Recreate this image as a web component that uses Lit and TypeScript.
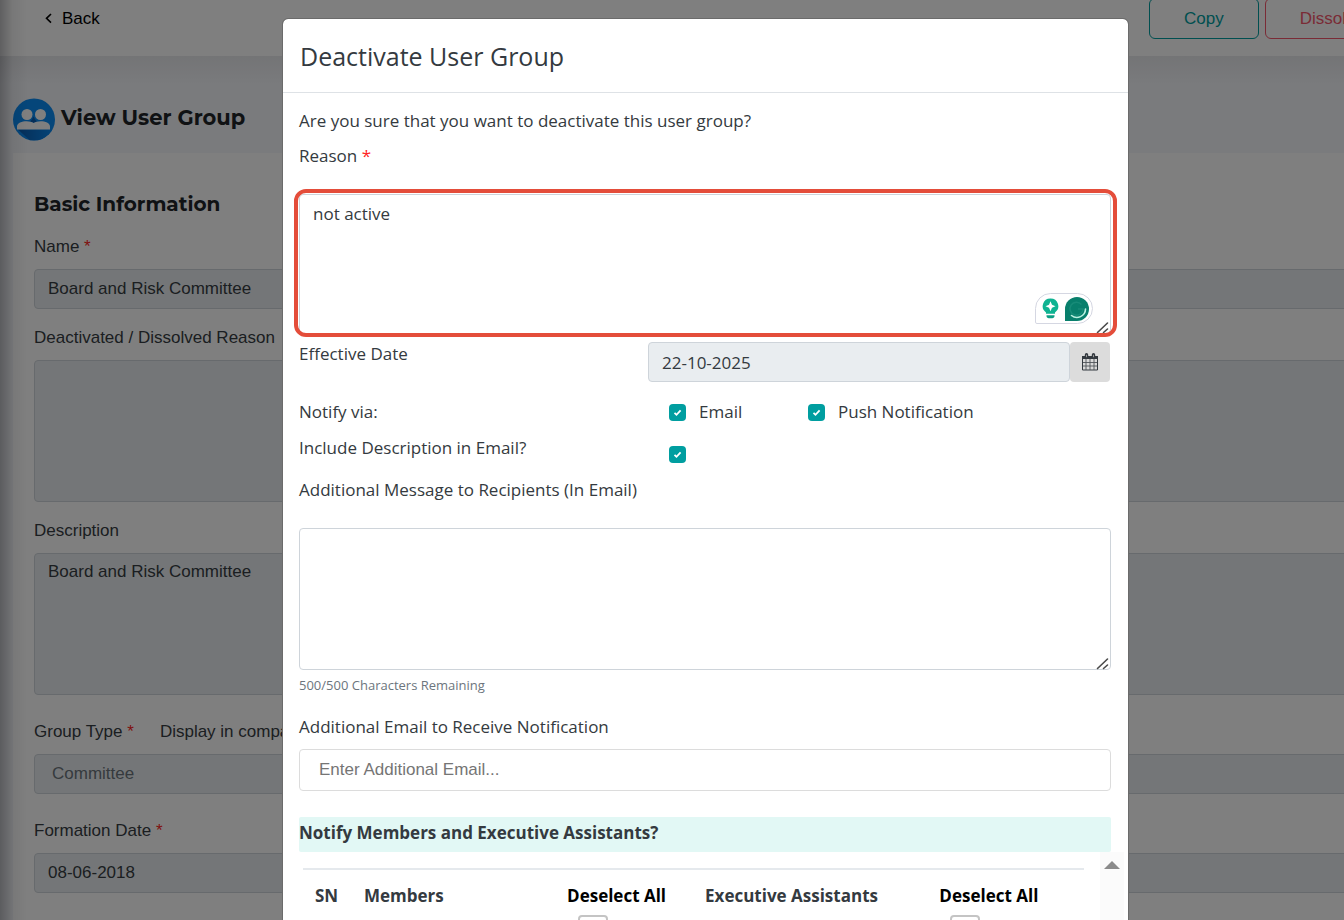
import { LitElement, html, css } from "lit";
import { customElement } from "lit/decorators.js";

const grip = html`<svg class="grip" viewBox="0 0 14 14" width="14" height="14" aria-hidden="true">
  <path d="M1.500 12.500 11.500 3M7.500 12.500 11.500 9" stroke="#4a4a4a" stroke-width="1.6" stroke-linecap="round" fill="none" />
</svg>`;

@customElement("app-root")
export class AppRoot extends LitElement {
  static styles = css`
    :host {
      display: block;
      height: 100vh;
      overflow: hidden;
      position: relative;
      font-family: "Liberation Sans", Arial, sans-serif;
      font-size: 17px;
      line-height: 24px;
      color: #373d43;
    }
    * {
      box-sizing: border-box;
    }
    input,
    textarea,
    button {
      font: inherit;
      color: inherit;
      margin: 0;
    }
    textarea {
      display: block;
      resize: none;
      width: 100%;
    }
    .req {
      color: #ff2424;
    }

    /* page behind the dialog */
    .page {
      width: calc(100% + 80px);
      background: #f4f6fa;
    }
    .topbar {
      height: 56px;
      background: #fff;
      overflow: hidden;
      display: flex;
      align-items: flex-end;
      justify-content: space-between;
      padding: 0 25px 17px 44px;
    }
    .back {
      display: flex;
      align-items: center;
      gap: 8px;
      color: #000;
      text-decoration: none;
      padding-bottom: 8px;
    }
    .actions {
      display: flex;
      gap: 6px;
    }
    .outline {
      height: 41px;
      padding: 0 34px;
      background: none;
      border: 1px solid;
      border-radius: 6px;
    }
    .teal {
      color: #009ea0;
    }
    .red {
      color: #f5576c;
    }
    .heading {
      height: 97px;
      padding: 30px 13px 0;
      display: flex;
      align-items: center;
      gap: 6px;
      background: linear-gradient(#e8e9ec, #f4f6fa 28px);
    }
    h1,
    h3 {
      margin: 0;
      font-family: Montserrat, Inter, sans-serif;
      font-weight: 700;
      color: #212529;
    }
    h1 {
      font-size: 21px;
      line-height: 28px;
      padding-bottom: 3px;
    }
    h3 {
      font-size: 20px;
      line-height: 28px;
      margin-bottom: 17px;
    }
    .card {
      margin-left: 13px;
      padding: 37px 21px 60px;
      background: #fff;
    }
    .field {
      display: flex;
      flex-direction: column;
      gap: 10px;
      margin-bottom: 17px;
    }
    .field.wide {
      margin-bottom: 25px;
    }
    .labels {
      display: flex;
      gap: 26px;
    }
    .ctl {
      height: 40px;
      padding: 6px 13px;
      border: 1px solid #ced4da;
      border-radius: 4px;
      background: #e9edf0;
      width: 100%;
    }
    .ctl.area {
      height: 142px;
    }
    .ctl.muted {
      color: #6c757d;
      padding-left: 17px;
    }
    .edge {
      position: absolute;
      inset: 0 auto 0 0;
      width: 28px;
      background: linear-gradient(to right, rgba(0, 0, 10, 0.25), rgba(0, 0, 10, 0.06) 45%, transparent);
    }

    /* dialog */
    .overlay {
      position: absolute;
      inset: 0;
      overflow: hidden;
      background: rgba(0, 0, 0, 0.5);
      padding: 19px 216px 0 283px;
    }
    .dialog {
      background: #fff;
      border-radius: 5px;
      outline: 1px solid #6b6b6b;
      font-family: "Open Sans", sans-serif;
      color: #343a40;
    }
    .dialog header {
      height: 74px;
      padding: 0 17px;
      display: flex;
      align-items: center;
      border-bottom: 1px solid #dee2e6;
    }
    h2 {
      margin: 0;
      font-size: 25px;
      line-height: 32px;
      font-weight: 400;
    }
    .body {
      padding: 16px 17px 0 16px;
    }
    .body p {
      margin: 0 0 11px;
    }
    .box {
      position: relative;
      margin-top: 26px;
    }
    .box textarea,
    .email {
      height: 142px;
      border: 1px solid #ced4da;
      border-radius: 4px;
      background: #fff;
      padding: 7px 13px;
      outline: none;
    }
    .box.marked textarea {
      height: 140px;
    }
    .marked::after {
      content: "";
      position: absolute;
      inset: -5px -6px -3px -5px;
      border: 4px solid #e44d3a;
      border-radius: 12px;
      pointer-events: none;
    }
    .grip {
      position: absolute;
      right: 1px;
      bottom: 0;
    }
    .helper {
      position: absolute;
      right: 18px;
      bottom: 10px;
      width: 58px;
      height: 31px;
      border: 1px solid #d5d7e2;
      border-radius: 16px 16px 16px 2px;
      background: #fff;
      display: flex;
      align-items: center;
      justify-content: space-between;
      padding: 0 3px 0 6px;
    }
    .row {
      display: grid;
      grid-template-columns: 349px 1fr;
    }
    .date {
      display: flex;
      padding-right: 1px;
    }
    .date .ctl {
      flex: 1;
      min-width: 0;
    }
    .cal {
      width: 40px;
      height: 40px;
      padding: 0;
      border: 0;
      border-radius: 4px;
      background: #dcdcdc;
      display: grid;
      place-items: center;
    }
    .when {
      margin-top: 8px;
      margin-bottom: 18px;
    }
    .checks {
      display: grid;
      grid-template-columns: 139px 1fr;
      padding-left: 21px;
    }
    .check {
      display: flex;
      align-items: center;
      gap: 13px;
    }
    .tick {
      appearance: none;
      width: 17px;
      height: 17px;
      border-radius: 4px;
      background: #009ea0 center / 9px 9px no-repeat
        url("data:image/svg+xml,%3Csvg xmlns='http://www.w3.org/2000/svg' viewBox='0 0 9 9'%3E%3Cpath d='M1.5 4.8l2 2L7.6 2.4' fill='none' stroke='white' stroke-width='1.8'/%3E%3C/svg%3E");
    }
    .include {
      margin: 12px 0 13px;
    }
    .include .checks {
      padding-top: 10px;
      height: 29px;
    }
    .count {
      font-size: 13px;
      line-height: 20px;
      color: #6c757d;
      margin: 5px 0 20px;
    }
    .email {
      display: block;
      width: 100%;
      height: 42px;
      margin: 10px 0 26px;
      padding: 0 19px 3px;
      border-color: #dcdcdc;
    }
    .email::placeholder {
      color: #757575;
      font-family: "Liberation Sans", Arial, sans-serif;
      opacity: 1;
    }
    h4 {
      margin: 0;
      height: 35px;
      padding-top: 4px;
      font-size: 17px;
      line-height: 24px;
      font-weight: 700;
      background: #e2f8f5;
      border-radius: 2px;
    }
    .people {
      display: flex;
      justify-content: space-between;
      margin-right: -13px;
      padding-left: 4px;
    }
    table {
      flex: 1;
      margin: 16px 16px 0 0;
      border-collapse: collapse;
      border-top: 2px solid #e5e9ed;
      table-layout: fixed;
    }
    th,
    td {
      text-align: left;
      padding: 14px 0 7px 12px;
      white-space: nowrap;
    }
    td {
      padding-top: 0;
    }
    .c1 {
      width: 49px;
    }
    .c2 {
      width: 26%;
    }
    .c3 {
      width: 138px;
    }
    .c4 {
      width: 30%;
    }
    .all {
      color: #000;
    }
    .pick {
      appearance: none;
      display: block;
      width: 30px;
      height: 30px;
      margin-left: 11px;
      border: 2px solid #c4c4c4;
      border-radius: 4px;
    }
    .scroll {
      width: 24px;
      background: #fbfbfb;
      display: flex;
      justify-content: center;
      padding-top: 9px;
    }
  `;

  render() {
    return html`
      <main class="page">
        <nav class="topbar">
          <a class="back" href="#">
            <svg width="10" height="12" viewBox="0 0 10 12" aria-hidden="true">
              <path d="M7 1 2.500 5.300 7 9.600" fill="none" stroke="#000" stroke-width="1.6" />
            </svg>
            Back
          </a>
          <div class="actions">
            <button class="outline teal">Copy</button>
            <button class="outline red">Dissolve</button>
          </div>
        </nav>
        <div class="heading">
          <svg width="42" height="43" viewBox="0 0 42 42" aria-hidden="true">
            <defs>
              <clipPath id="disc"><circle cx="21" cy="21" r="21" /></clipPath>
              <linearGradient id="fade" x1="0" y1="0" x2="1" y2="0">
                <stop offset="0" stop-color="#0a5cb0" />
                <stop offset="1" stop-color="#0a8cf4" />
              </linearGradient>
            </defs>
            <circle cx="21" cy="21" r="21" fill="#0a8cf4" />
            <path clip-path="url(#disc)" d="M5 31 17 42h12L42 31z" fill="url(#fade)" />
            <path d="M17 23c1.500-1 2.500-3 3.500-5 1 2 2 4 3.500 5l-3.500 1.500z" fill="#0a5cb0" />
            <circle cx="14" cy="16" r="5.500" fill="#fff" />
            <circle cx="27.500" cy="16" r="5.500" fill="#fff" />
            <path d="M4 31v-3c0-3.500 5-5.200 9.500-5.200 3 0 5.500.8 7.200 1.700 1.700-.9 4-1.700 7-1.700 4.500 0 9.300 1.700 9.300 5.200v3z" fill="#fff" />
          </svg>
          <h1>View User Group</h1>
        </div>
        <section class="card">
          <h3>Basic Information</h3>
          <div class="field">
            <label for="name">Name <span class="req">*</span></label>
            <input id="name" class="ctl" readonly value="Board and Risk Committee" />
          </div>
          <div class="field">
            <label for="why">Deactivated / Dissolved Reason</label>
            <textarea id="why" class="ctl area" readonly></textarea>
          </div>
          <div class="field wide">
            <label for="desc">Description</label>
            <textarea id="desc" class="ctl area" readonly .value=${"Board and Risk Committee"}></textarea>
          </div>
          <div class="field wide">
            <div class="labels">
              <label for="type">Group Type <span class="req">*</span></label>
              <span>Display in company</span>
            </div>
            <input id="type" class="ctl muted" readonly value="Committee" />
          </div>
          <div class="field">
            <label for="formed">Formation Date <span class="req">*</span></label>
            <input id="formed" class="ctl" readonly value="08-06-2018" />
          </div>
        </section>
      </main>
      <div class="edge"></div>
      <div class="overlay">
        <div class="dialog" role="dialog" aria-labelledby="title">
          <header><h2 id="title">Deactivate User Group</h2></header>
          <div class="body">
            <p>Are you sure that you want to deactivate this user group?</p>
            <label for="reason">Reason <span class="req">*</span></label>
            <div class="box marked">
              <textarea id="reason" .value=${"not active"}></textarea>
              ${grip}
              <div class="helper">
                <svg width="17" height="21" viewBox="0 0 17 21" aria-hidden="true">
                  <path d="M8.500.5a7.700 7.700 0 0 1 4.500 14v1.300H4v-1.300A7.700 7.700 0 0 1 8.500.5z" fill="#0fb392" />
                  <path d="M4.500 17.300h8v.7c0 1.300-1 2.200-2.200 2.200H6.700c-1.200 0-2.200-.9-2.200-2.200z" fill="#0c9f84" />
                  <path d="M8.500 3.300 10 6.800 13.500 8.300 10 9.800 8.500 13.300 7 9.800 3.500 8.300 7 6.800z" fill="#fff" />
                </svg>
                <svg width="24" height="24" viewBox="0 0 24 24" aria-hidden="true">
                  <path d="M0 24V12a12 12 0 1 1 12 12z" fill="#087f6c" />
                  <path d="M16.500 7.500A6.500 6.500 0 1 0 18 12H13" fill="none" stroke="#178b78" stroke-width="1.500" />
                  <path d="M20.500 12A8.600 8.600 0 0 1 6.500 18.500" fill="none" stroke="#b9f0e0" stroke-width="1.600" stroke-linecap="round" />
                </svg>
              </div>
            </div>
            <div class="row when">
              <label for="date">Effective Date</label>
              <div class="date">
                <input id="date" class="ctl" readonly value="22-10-2025" />
                <button class="cal" aria-label="Pick a date">
                  <svg width="16" height="18" viewBox="0 0 16 18" aria-hidden="true">
                    <path d="M.5 3.500h15v13.500H.5z" fill="#d9d9d9" stroke="#343a40" />
                    <path d="M0 3h16v3H0z" fill="#343a40" />
                    <path d="M4 6v11M8 6v11M12 6v11M1 9.500h14M1 13h14" stroke="#50555a" stroke-width=".9" />
                    <path d="M4.500 1.800v2.400M11.500 1.800v2.400" stroke="#343a40" stroke-width="3.400" stroke-linecap="round" />
                    <path d="M4.500 1.800v2.400M11.500 1.800v2.400" stroke="#999" stroke-width="1" />
                  </svg>
                </button>
              </div>
            </div>
            <div class="row">
              <span>Notify via:</span>
              <div class="checks">
                <label class="check"><input class="tick" type="checkbox" checked />Email</label>
                <label class="check"><input class="tick" type="checkbox" checked />Push Notification</label>
              </div>
            </div>
            <div class="row include">
              <label for="incl">Include Description in Email?</label>
              <div class="checks"><input id="incl" class="tick" type="checkbox" checked /></div>
            </div>
            <label for="msg">Additional Message to Recipients (In Email)</label>
            <div class="box">
              <textarea id="msg"></textarea>
              ${grip}
            </div>
            <div class="count">500/500 Characters Remaining</div>
            <label for="extra">Additional Email to Receive Notification</label>
            <input id="extra" class="email" type="email" placeholder="Enter Additional Email..." />
            <h4>Notify Members and Executive Assistants?</h4>
            <div class="people">
              <table>
                <thead>
                  <tr>
                    <th class="c1">SN</th>
                    <th class="c2">Members</th>
                    <th class="c3 all">Deselect All</th>
                    <th class="c4">Executive Assistants</th>
                    <th class="all">Deselect All</th>
                  </tr>
                </thead>
                <tbody>
                  <tr>
                    <td></td>
                    <td></td>
                    <td><input class="pick" type="checkbox" aria-label="Member" /></td>
                    <td></td>
                    <td><input class="pick" type="checkbox" aria-label="Assistant" /></td>
                  </tr>
                </tbody>
              </table>
              <div class="scroll">
                <svg width="16" height="8" viewBox="0 0 16 8" aria-hidden="true"><path d="M0 8 8 0l8 8z" fill="#8b8b8b" /></svg>
              </div>
            </div>
          </div>
        </div>
      </div>
    `;
  }
}
